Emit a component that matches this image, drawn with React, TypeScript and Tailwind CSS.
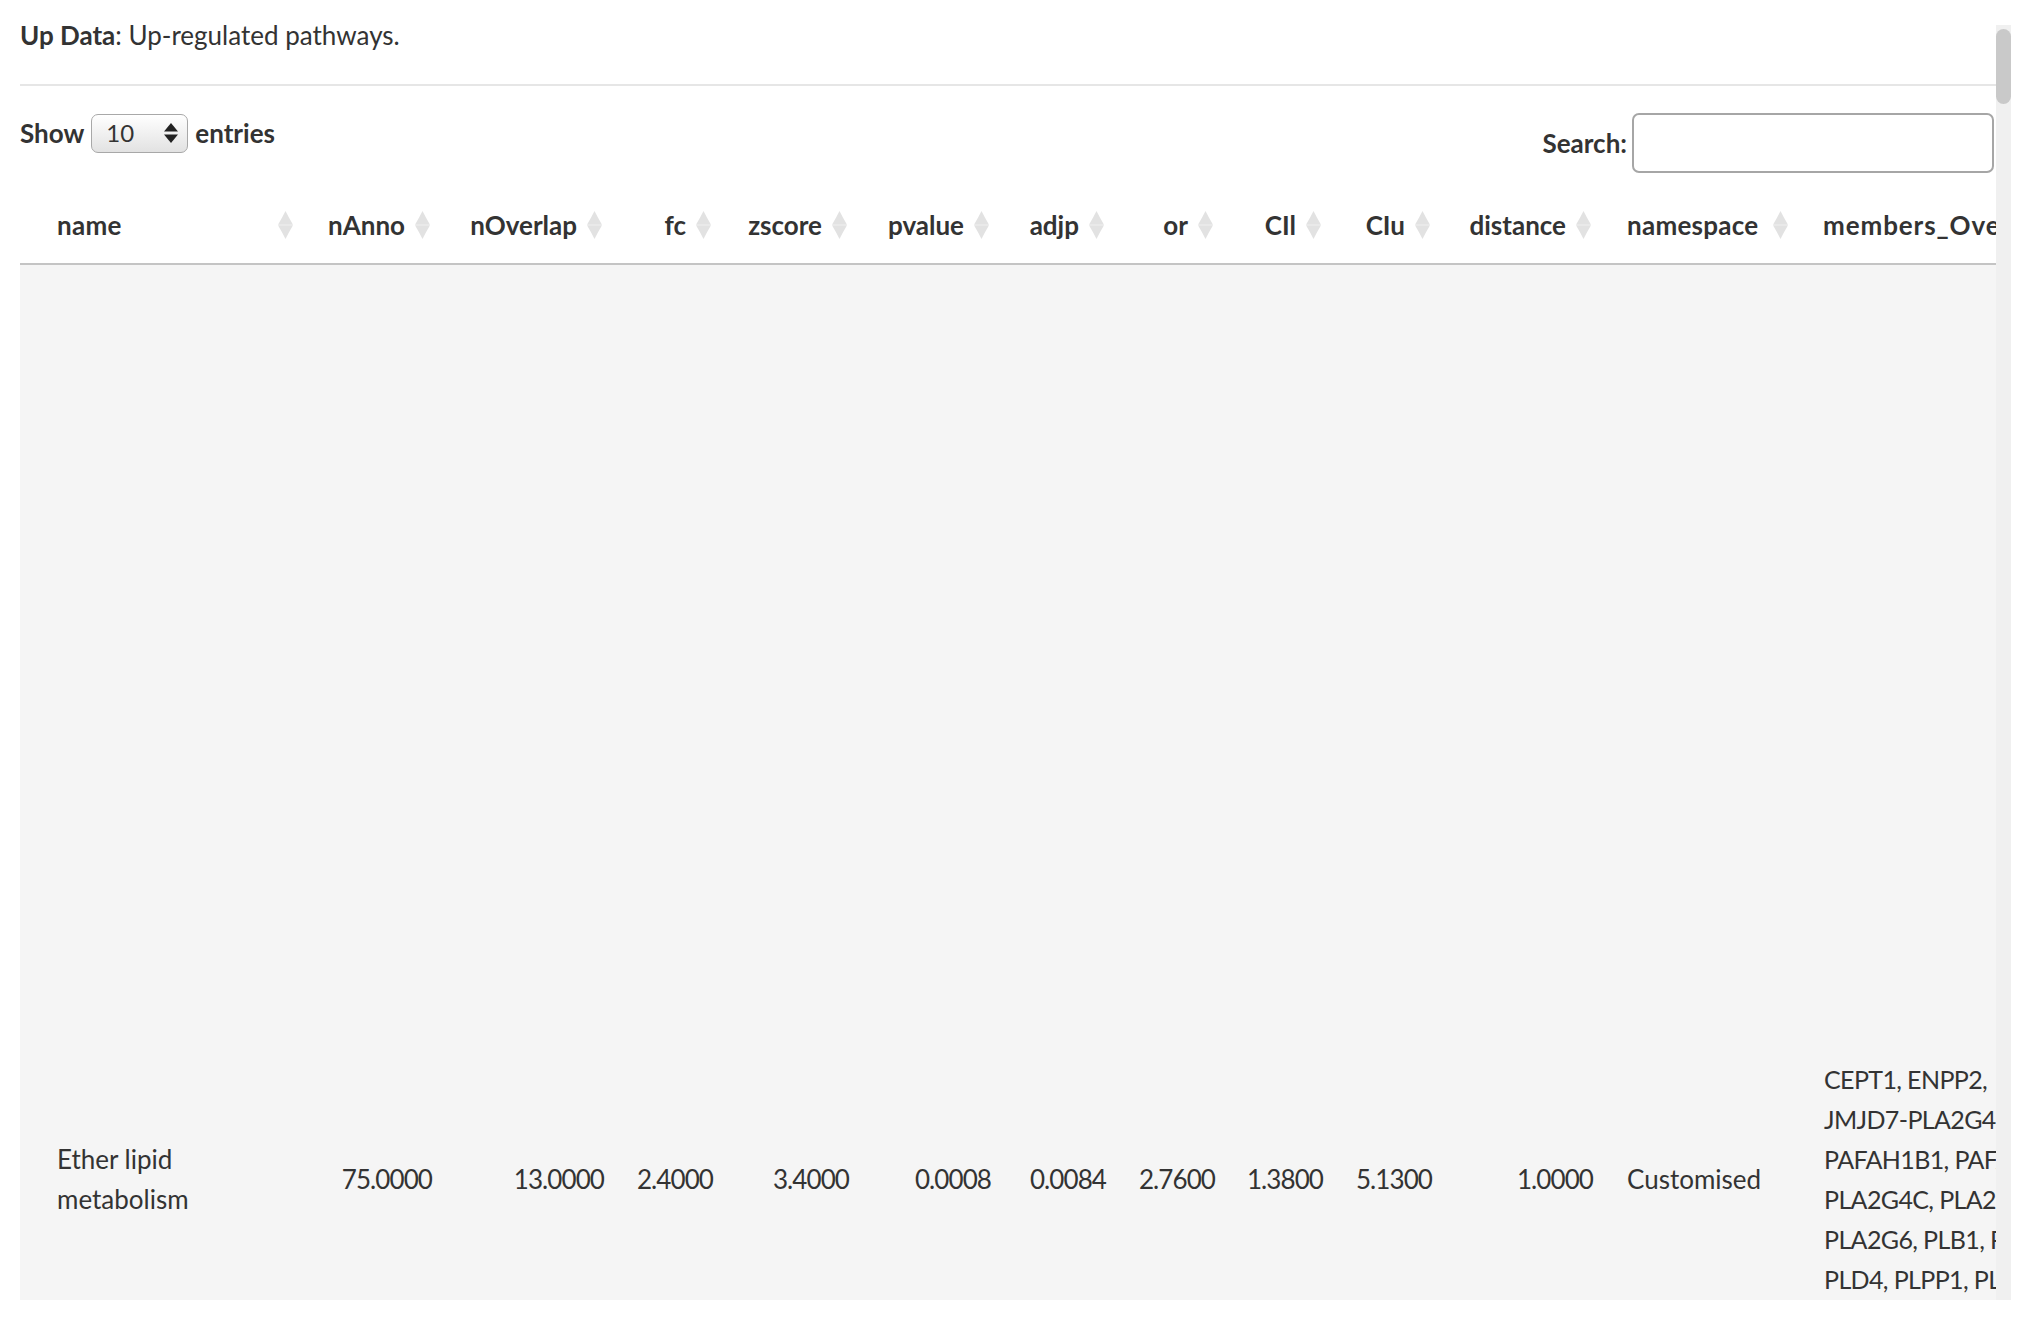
import React from "react";

type Col = { key: string; label: string; width: number; kind: "name" | "num" | "text" };

const columns: Col[] = [
  { key: "name", label: "name", width: 283, kind: "name" },
  { key: "nAnno", label: "nAnno", width: 138, kind: "num" },
  { key: "nOverlap", label: "nOverlap", width: 172, kind: "num" },
  { key: "fc", label: "fc", width: 109, kind: "num" },
  { key: "zscore", label: "zscore", width: 136, kind: "num" },
  { key: "pvalue", label: "pvalue", width: 142, kind: "num" },
  { key: "adjp", label: "adjp", width: 115, kind: "num" },
  { key: "or", label: "or", width: 109, kind: "num" },
  { key: "CIl", label: "CIl", width: 108, kind: "num" },
  { key: "CIu", label: "CIu", width: 109, kind: "num" },
  { key: "distance", label: "distance", width: 161, kind: "num" },
  { key: "namespace", label: "namespace", width: 196, kind: "text" },
  { key: "members_Overlap", label: "members_Overlap", width: 330, kind: "text" },
  { key: "members_Anno", label: "members_Anno", width: 620, kind: "text" },
];

const row: Record<string, string> = {
  name: "Ether lipid metabolism",
  nAnno: "75.0000",
  nOverlap: "13.0000",
  fc: "2.4000",
  zscore: "3.4000",
  pvalue: "0.0008",
  adjp: "0.0084",
  or: "2.7600",
  CIl: "1.3800",
  CIu: "5.1300",
  distance: "1.0000",
  namespace: "Customised",
};

const overlapLines = [
  "CEPT1, ENPP2,",
  "JMJD7-PLA2G4B,",
  "PAFAH1B1, PAFAH2,",
  "PLA2G4C, PLA2G4E,",
  "PLA2G6, PLB1, PLD1,",
  "PLD4, PLPP1, PLPP2",
];

function SortIcon() {
  return (
    <svg width="15" height="28" viewBox="0 0 15 28" className="shrink-0">
      <path d="M7.5 0 Q10.5 6 15 13.8 H0 Q4.5 6 7.5 0 Z" fill="#e2e2e2" />
      <path d="M0 14.3 H15 Q10.5 22 7.5 28 Q4.5 22 0 14.3 Z" fill="#e2e2e2" />
    </svg>
  );
}

function HeaderCell({ col }: { col: Col }) {
  if (col.kind === "num") {
    return (
      <th className="pt-[20px] pb-[18px] pr-[11px] border-b-2 border-[#c4c4c4] font-bold">
        <div className="flex items-center justify-end gap-[10px]">
          <span>{col.label}</span>
          <SortIcon />
        </div>
      </th>
    );
  }
  const pl = col.kind === "name" ? "pl-[37px]" : "pl-[25px]";
  const track = col.key === "members_Overlap" ? "tracking-[0.035em]" : "tracking-[0.01em]";
  return (
    <th className={`pt-[20px] pb-[18px] pr-[10px] ${pl} border-b-2 border-[#c4c4c4] font-bold text-left`}>
      <div className="flex items-center justify-between gap-[10px]">
        <span className={`whitespace-nowrap ${track}`}>{col.label}</span>
        <SortIcon />
      </div>
    </th>
  );
}

function BodyCell({ col }: { col: Col }) {
  if (col.kind === "name") {
    return <td className="pl-[37px] pr-[60px] align-middle">{row.name}</td>;
  }
  if (col.kind === "num") {
    return <td className="pr-[9px] text-right align-middle tracking-[-0.035em]">{row[col.key]}</td>;
  }
  if (col.key === "members_Overlap") {
    return (
      <td className="pl-[26px] align-middle whitespace-nowrap text-[25px] tracking-[-0.025em]">
        {overlapLines.map((l) => (
          <div key={l}>{l}</div>
        ))}
      </td>
    );
  }
  if (col.key === "members_Anno") {
    return <td className="pl-[26px] align-middle" />;
  }
  return <td className="pl-[25px] align-middle">{row[col.key]}</td>;
}

export default function App() {
  const tableWidth = columns.reduce((s, c) => s + c.width, 0);
  return (
    <div className="w-[2024px] h-[1320px] bg-white overflow-hidden text-[#333] text-[26px] leading-[40px] font-['Lato','Noto_Sans',sans-serif]">
      <div className="flex h-[1300px]">
        <div className="w-[1996px] overflow-hidden pl-[20px]">
          <p className="pt-[15px]">
            <b className="font-bold">Up Data</b>: Up-regulated pathways.
          </p>
          <div className="mt-[29px] h-[2px] bg-[#e6e6e6]" />

          <div className="mt-[27px] pr-[2px] flex items-start justify-between">
            <div className="flex items-center font-bold">
              <span>Show</span>
              <div className="ml-[7px] mr-[7px] w-[97px] h-[39px] rounded-[7px] border-[1.5px] border-[#a8a8a8] bg-gradient-to-b from-white to-[#e2e2e2] flex items-center justify-between pl-[14px] pr-[9px] font-normal shadow-[inset_0_1px_0_#fff]">
                <span className="text-[24px]">10</span>
                <svg width="14" height="20" viewBox="0 0 14 20">
                  <path d="M7 0 L14 8.5 H0 Z" fill="#222" />
                  <path d="M0 11.5 H14 L7 20 Z" fill="#222" />
                </svg>
              </div>
              <span>entries</span>
            </div>
            <div className="flex items-center font-bold">
              <span>Search:</span>
              <input
                type="search"
                className="ml-[5px] w-[362px] h-[60px] rounded-[7px] border-2 border-[#a6a6a6] bg-white outline-none px-[10px] font-normal"
              />
            </div>
          </div>

          <div className="mt-[12px] overflow-hidden">
            <table className="table-fixed border-collapse" style={{ width: tableWidth }}>
              <colgroup>
                {columns.map((c) => (
                  <col key={c.key} style={{ width: c.width }} />
                ))}
              </colgroup>
              <thead>
                <tr>
                  {columns.map((c) => (
                    <HeaderCell key={c.key} col={c} />
                  ))}
                </tr>
              </thead>
              <tbody>
                <tr className="h-[1828px] bg-[#f5f5f5]">
                  {columns.map((c) => (
                    <BodyCell key={c.key} col={c} />
                  ))}
                </tr>
              </tbody>
            </table>
          </div>
        </div>

        {/* scrollbar of the output panel */}
        <div className="w-[15px] mt-[25px] bg-[#f0f0f0] pt-[4px]">
          <div className="h-[75px] rounded-full bg-[#c9c9c9]" />
        </div>
      </div>
    </div>
  );
}
